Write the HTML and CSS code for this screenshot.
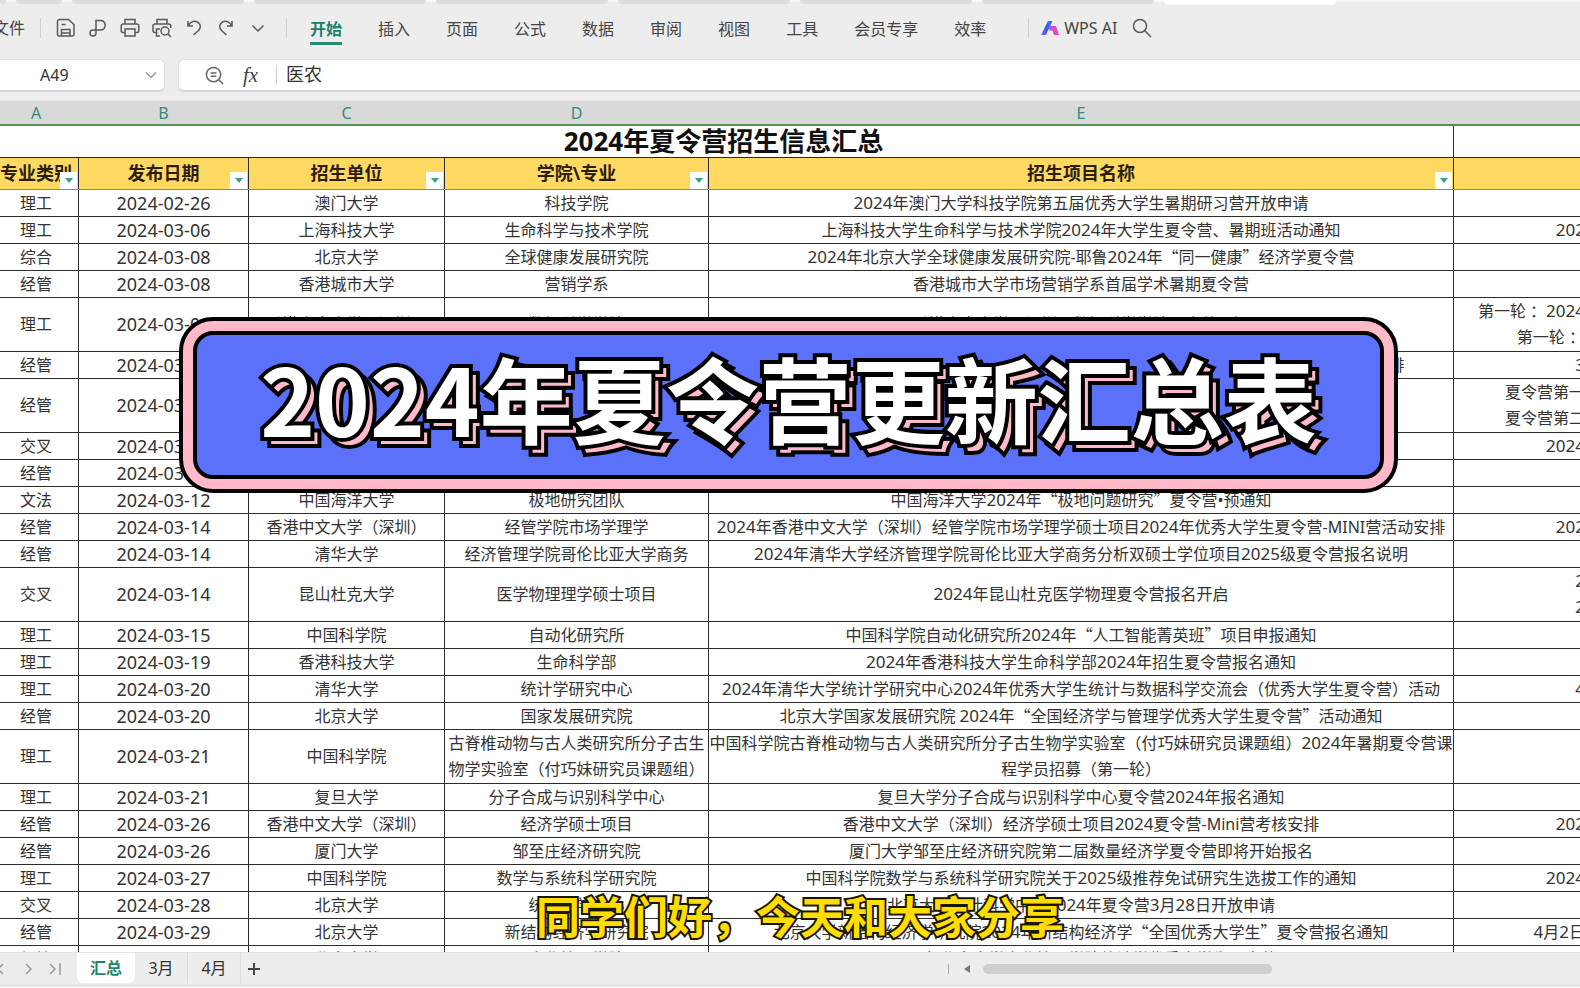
FILE: index.html
```html
<!DOCTYPE html>
<html lang="zh-CN">
<head>
<meta charset="utf-8">
<title>2024年夏令营招生信息汇总</title>
<link rel="stylesheet" href="styles.css">
</head>
<body>
<div class="app">
  <div class="doc-tabs" aria-hidden="true">
    <i class="w-s"></i><i class="w-m"></i><i class="w-l"></i><i class="w-l"></i><i class="w-l"></i><i class="w-l"></i><i class="w-l"></i><i class="w-l"></i><i class="w-l active"></i>
  </div>

  <header class="menubar">
    <button class="menu file">文件</button>
    <span class="sep"></span>
    <div class="quick">
      <button class="icon" aria-label="保存"><svg viewBox="0 0 20 20"><path d="M1.500 3.500a2 2 0 0 1 2-2h9l5.500 5v9.500a2 2 0 0 1-2 2H3.500a2 2 0 0 1-2-2zM5.500 18v-6.500h8.500V18M5.500 6.500h4M5.500 15H14"/></svg></button>
      <button class="icon" aria-label="输出"><svg viewBox="0 0 20 20"><path d="M8 6.500V2.500h5a4.800 4.800 0 0 1 0 9.500H5a3 3 0 1 0 3 3V6.500"/></svg></button>
      <button class="icon" aria-label="打印"><svg viewBox="0 0 20 20"><path d="M5 6V1.500h10V6M5 14.500H3.200a2 2 0 0 1-2-2V8a2 2 0 0 1 2-2h13.600a2 2 0 0 1 2 2v4.500a2 2 0 0 1-2 2H15M5 11h10v7H5z"/></svg></button>
      <button class="icon" aria-label="打印预览"><svg viewBox="0 0 20 20"><path d="M5 6V1.500h10V6M4.500 14.500H3a2 2 0 0 1-2-2V8a2 2 0 0 1 2-2h13.800a2 2 0 0 1 2 2v2M8 18H4.500v-7H8"/><circle cx="13" cy="13" r="4"/><path d="m15.800 15.800 3.200 3.200"/></svg></button>
      <button class="icon" aria-label="撤销"><svg viewBox="0 0 20 20"><path d="M4 3v5h5M4.300 7.600C6.500 3.500 11 2 14 4.300s3 5.700.500 8.200L9.500 17"/></svg></button>
      <button class="icon" aria-label="恢复"><svg viewBox="0 0 20 20"><path d="M16 3v5h-5M15.700 7.600C13.500 3.500 9 2 6 4.300s-3 5.700-.500 8.200l5 4.500"/></svg></button>
      <button class="icon" aria-label="更多"><svg viewBox="0 0 20 20"><path d="m4.500 7.500 5.500 5.500 5.500-5.500"/></svg></button>
    </div>
    <span class="sep"></span>
    <nav class="tabs">
      <button class="menu on">开始</button><button class="menu">插入</button><button class="menu">页面</button><button class="menu">公式</button><button class="menu">数据</button><button class="menu">审阅</button><button class="menu">视图</button><button class="menu">工具</button><button class="menu">会员专享</button><button class="menu">效率</button>
    </nav>
    <span class="sep"></span>
    <button class="ai">
      <svg class="logo" viewBox="0 0 20 20">
        <defs>
          <linearGradient id="ai1" x1="0" y1="1" x2="1" y2="0"><stop offset="0" stop-color="#8a5cff"/><stop offset="0.500" stop-color="#2f5bf0"/><stop offset="1" stop-color="#3f7bff"/></linearGradient>
          <linearGradient id="ai2" x1="0" y1="0" x2="1" y2="1"><stop offset="0" stop-color="#c04be8"/><stop offset="1" stop-color="#f0508c"/></linearGradient>
        </defs>
        <path d="M8 3h4.500L6 17H1z" fill="url(#ai1)"/>
        <path d="M10 8h6l3 9h-5l-1.500-4.500H9z" fill="url(#ai2)"/>
      </svg>WPS AI</button>
    <button class="icon search" aria-label="搜索"><svg viewBox="0 0 20 20"><circle cx="8" cy="8" r="6.500"/><path d="m12.700 12.700 6.300 6.300"/></svg></button>
  </header>

  <div class="formula-row">
    <div class="namebox">
      <input aria-label="名称框" value="A49">
      <svg class="chev" viewBox="0 0 12 12"><path d="m1 3.500 5 5 5-5"/></svg>
    </div>
    <div class="formula">
      <svg class="zoom" viewBox="0 0 20 20"><circle cx="9" cy="9" r="7.500"/><path d="M14.500 14.500 19 19M6 7.300h6M6 10.700h6"/></svg>
      <span class="fx">fx</span>
      <span class="sep"></span>
      <input aria-label="编辑栏" value="医农">
    </div>
  </div>

  <main class="sheet">
    <table>
      <colgroup><col class="ca"><col class="cb"><col class="cc"><col class="cd"><col class="ce"><col></colgroup>
      <thead>
        <tr class="letters"><th>A</th><th>B</th><th>C</th><th>D</th><th>E</th><th></th></tr>
        <tr class="title"><th colspan="5">2024年夏令营招生信息汇总</th><th></th></tr>
        <tr class="fields">
          <th>专业类别<button class="filter" aria-label="筛选专业类别"></button></th>
          <th>发布日期<button class="filter" aria-label="筛选发布日期"></button></th>
          <th>招生单位<button class="filter" aria-label="筛选招生单位"></button></th>
          <th>学院\专业<button class="filter" aria-label="筛选学院专业"></button></th>
          <th>招生项目名称<button class="filter" aria-label="筛选招生项目名称"></button></th>
          <th></th>
        </tr>
      </thead>
      <tbody>
        <tr><td>理工</td><td>2024-02-26</td><td>澳门大学</td><td>科技学院</td><td><b>2024</b>年澳门大学科技学院第五届优秀大学生暑期研习营开放申请</td><td></td></tr>
        <tr><td>理工</td><td>2024-03-06</td><td>上海科技大学</td><td>生命科学与技术学院</td><td>上海科技大学生命科学与技术学院<b>2024</b>年大学生夏令营、暑期班活动通知</td><td><b>202</b></td></tr>
        <tr><td>综合</td><td>2024-03-08</td><td>北京大学</td><td>全球健康发展研究院</td><td><b>2024</b>年北京大学全球健康发展研究院-耶鲁<b>2024</b>年<i>“</i>同一健康<i>”</i>经济学夏令营</td><td></td></tr>
        <tr><td>经管</td><td>2024-03-08</td><td>香港城市大学</td><td>营销学系</td><td>香港城市大学市场营销学系首届学术暑期夏令营</td><td></td></tr>
        <tr class="tall"><td>理工</td><td>2024-03-08</td><td>香港中文大学（深圳）</td><td>数据科学学院</td><td>香港中文大学（深圳）数据科学学院夏令营通知</td><td>第一轮 ：<b>2024</b><br>第一轮 ：</td></tr>
        <tr><td>经管</td><td>2024-03-11</td><td></td><td></td><td><b>2024</b>年香港中文大学（深圳）经管学院市场学理学硕士项目优秀大学生夏令营考核活动安排</td><td><b>3</b></td></tr>
        <tr class="tall"><td>经管</td><td>2024-03-11</td><td></td><td></td><td></td><td>夏令营第一<br>夏令营第二</td></tr>
        <tr><td>交叉</td><td>2024-03-12</td><td></td><td></td><td></td><td><b>2024</b></td></tr>
        <tr><td>经管</td><td>2024-03-12</td><td></td><td></td><td></td><td></td></tr>
        <tr><td>文法</td><td>2024-03-12</td><td>中国海洋大学</td><td>极地研究团队</td><td>中国海洋大学<b>2024</b>年<i>“</i>极地问题研究<i>”</i>夏令营•预通知</td><td></td></tr>
        <tr><td>经管</td><td>2024-03-14</td><td>香港中文大学（深圳）</td><td>经管学院市场学理学</td><td><b>2024</b>年香港中文大学（深圳）经管学院市场学理学硕士项目<b>2024</b>年优秀大学生夏令营-MINI营活动安排</td><td><b>202</b></td></tr>
        <tr><td>经管</td><td>2024-03-14</td><td>清华大学</td><td>经济管理学院哥伦比亚大学商务</td><td><b>2024</b>年清华大学经济管理学院哥伦比亚大学商务分析双硕士学位项目<b>2025</b>级夏令营报名说明</td><td></td></tr>
        <tr class="tall"><td>交叉</td><td>2024-03-14</td><td>昆山杜克大学</td><td>医学物理理学硕士项目</td><td><b>2024</b>年昆山杜克医学物理夏令营报名开启</td><td><b>2</b><br><b>2</b></td></tr>
        <tr><td>理工</td><td>2024-03-15</td><td>中国科学院</td><td>自动化研究所</td><td>中国科学院自动化研究所<b>2024</b>年<i>“</i>人工智能菁英班<i>”</i>项目申报通知</td><td></td></tr>
        <tr><td>理工</td><td>2024-03-19</td><td>香港科技大学</td><td>生命科学部</td><td><b>2024</b>年香港科技大学生命科学部<b>2024</b>年招生夏令营报名通知</td><td></td></tr>
        <tr><td>理工</td><td>2024-03-20</td><td>清华大学</td><td>统计学研究中心</td><td><b>2024</b>年清华大学统计学研究中心<b>2024</b>年优秀大学生统计与数据科学交流会（优秀大学生夏令营）活动</td><td><b>4</b></td></tr>
        <tr><td>经管</td><td>2024-03-20</td><td>北京大学</td><td>国家发展研究院</td><td>北京大学国家发展研究院 <b>2024</b>年<i>“</i>全国经济学与管理学优秀大学生夏令营<i>”</i>活动通知</td><td></td></tr>
        <tr class="tall"><td>理工</td><td>2024-03-21</td><td>中国科学院</td><td>古脊椎动物与古人类研究所分子古生<br>物学实验室（付巧妹研究员课题组）</td><td>中国科学院古脊椎动物与古人类研究所分子古生物学实验室（付巧妹研究员课题组）<b>2024</b>年暑期夏令营课<br>程学员招募（第一轮）</td><td></td></tr>
        <tr><td>理工</td><td>2024-03-21</td><td>复旦大学</td><td>分子合成与识别科学中心</td><td>复旦大学分子合成与识别科学中心夏令营<b>2024</b>年报名通知</td><td></td></tr>
        <tr><td>经管</td><td>2024-03-26</td><td>香港中文大学（深圳）</td><td>经济学硕士项目</td><td>香港中文大学（深圳）经济学硕士项目<b>2024</b>夏令营-Mini营考核安排</td><td><b>202</b></td></tr>
        <tr><td>经管</td><td>2024-03-26</td><td>厦门大学</td><td>邹至庄经济研究院</td><td>厦门大学邹至庄经济研究院第二届数量经济学夏令营即将开始报名</td><td></td></tr>
        <tr><td>理工</td><td>2024-03-27</td><td>中国科学院</td><td>数学与系统科学研究院</td><td>中国科学院数学与系统科学研究院关于<b>2025</b>级推荐免试研究生选拔工作的通知</td><td><b>2024</b></td></tr>
        <tr><td>交叉</td><td>2024-03-28</td><td>北京大学</td><td>统计科学中心</td><td>北京大学统计科学中心<b>2024</b>年夏令营<b>3</b>月<b>28</b>日开放申请</td><td></td></tr>
        <tr><td>经管</td><td>2024-03-29</td><td>北京大学</td><td>新结构经济学研究院</td><td>北京大学新结构经济学研究院<b>2024</b>年新结构经济学<i>“</i>全国优秀大学生<i>”</i>夏令营报名通知</td><td><b>4</b>月<b>2</b>日</td></tr>
        <tr><td>经管</td><td>2024-03-29</td><td>北京大学</td><td>光华管理学院</td><td><b>2024</b>年北京大学光华管理学院统计学优秀大学生夏令营</td><td></td></tr>
      </tbody>
    </table>
  </main>

  <footer class="bottom">
    <div class="steps">
      <button class="step" aria-label="上一个"><svg viewBox="0 0 12 12"><path d="M8 1 3 6l5 5"/></svg></button>
      <button class="step" aria-label="下一个"><svg viewBox="0 0 12 12"><path d="m4 1 5 5-5 5"/></svg></button>
      <button class="step" aria-label="最后一个"><svg viewBox="0 0 12 12"><path d="m1 1 5 5-5 5M11 0v12"/></svg></button>
    </div>
    <button class="stab on">汇总</button>
    <button class="stab">3月</button>
    <button class="stab">4月</button>
    <button class="add" aria-label="新建工作表"><svg viewBox="0 0 12 12"><path d="M6 0v12M0 6h12"/></svg></button>
    <div class="scroll">
      <span class="grip"></span>
      <svg class="arrow" viewBox="0 0 6 8"><path d="M6 0v8L0 4z"/></svg>
      <span class="thumb"></span>
    </div>
  </footer>
  <div class="status"></div>
</div>

<div class="banner"><div class="banner-in"><h1 class="headline" data-text="2024年夏令营更新汇总表">2024年夏令营更新汇总表</h1></div></div>
<p class="caption">同学们好，今天和大家分享</p>
</body>
</html>
```

FILE: styles.css
```css
* { box-sizing: border-box; }

body {
  margin: 0;
  overflow: hidden;
  background: #ededed;
  color: #333;
  font: 16px/26px "Noto Sans", "Noto Sans CJK SC", sans-serif;
}

button, input {
  margin: 0;
  padding: 0;
  border: 0;
  background: none;
  color: inherit;
  font: inherit;
  white-space: nowrap;
}

svg { display: block; fill: none; stroke: currentColor; }

.app { display: flex; flex-direction: column; height: 100vh; }

/* document tabs */
.doc-tabs { display: flex; gap: 10px; height: 5px; align-items: flex-start; background: linear-gradient(#f8f8f8 2px, #ededed 2px); }
.doc-tabs i { height: 4px; background: #dcdcdc; border-radius: 0 0 4px 4px; }
.doc-tabs .w-s { width: 6px; }
.doc-tabs .w-m { width: 46px; }
.doc-tabs .w-l { width: 172px; }
.doc-tabs .active { background: #fff; height: 5px; }

/* menu bar */
.menubar { display: flex; align-items: center; height: 46px; color: #444; }
.sep { width: 1px; height: 20px; background: #d0d0d0; flex: none; }
.menu { height: 32px; }
.file { margin-left: -7px; margin-right: 15px; }
.quick { display: flex; gap: 12px; padding: 0 18px 0 15px; }
.icon { width: 20px; height: 20px; color: #5a5a5a; }
.icon svg { width: 20px; height: 20px; stroke-width: 1.5; }
.tabs { display: flex; gap: 36px; padding: 2px 42px 0 23px; }
.tabs .on { color: #16836a; font-weight: 700; border-bottom: 3px solid #2a8a70; border-radius: 1px; padding-top: 3px; }
.ai { display: flex; align-items: center; gap: 4px; padding-left: 11px; }
.logo { width: 20px; height: 20px; stroke: none; }
.search { margin-left: 15px; }

/* formula row */
.formula-row { display: flex; gap: 13px; padding: 8px 0 9px; }
.namebox, .formula { display: flex; align-items: center; height: 33px; background: #fff; border: 1px solid #e0e0e0; border-bottom: 2px solid #d6d6d6; }
.namebox { width: 165px; border-left: 0; border-radius: 0 6px 6px 0; padding-right: 7px; }
.namebox input { flex: 1; min-width: 0; padding-left: 40px; }
.chev { width: 12px; height: 12px; color: #999; stroke-width: 1.5; }
.formula { flex: 1; border-right: 0; border-radius: 6px 0 0 6px; padding-left: 26px; }
.zoom { width: 19px; height: 19px; stroke-width: 1.6; color: #666; }
.fx { margin: 0 15px 0 19px; width: 18px; font: italic 21px/24px "Liberation Serif", serif; color: #444; }
.formula input { flex: 1; min-width: 0; padding: 0 0 3px 9px; font-size: 18px; }

/* sheet */
.sheet { flex: 1; min-height: 0; overflow: hidden; background: #fff; }
table { width: calc(100% + 13px); margin-left: -7px; border-collapse: collapse; table-layout: fixed; }
.ca { width: 85px; }
.cb { width: 170px; }
.cc { width: 196px; }
.cd { width: 264px; }
.ce { width: 745px; }
th, td { padding: 0; border: 1px solid #2b2b2b; text-align: center; white-space: nowrap; overflow: hidden; }
td { height: 27px; line-height: 24px; }
.tall td { height: 54px; line-height: 26px; }
td b { font-size: 17px; font-weight: 400; line-height: 1; }
td:nth-child(2) { font-size: 18px; }
td i { font-family: "Noto Sans CJK SC", sans-serif; font-style: normal; line-height: 1; }
td:last-child { text-align: right; }
.letters th { height: 24px; border: 0; border-bottom: 2px solid #548f4c; background: #d9d9da; color: #2f8c7c; font-weight: 400; line-height: 22px; }
.title th { height: 32px; color: #111; font-size: 26px; line-height: 30px; }
.fields th { position: relative; height: 32px; background: #ffd962; border-bottom-color: #5f9f78; color: #2b1d10; font-size: 18px; line-height: 30px; }
.filter { position: absolute; right: 1px; bottom: 0; display: grid; place-items: center; width: 17px; height: 17px; background: #fff; }
.filter::after { content: ""; border: 4px solid transparent; border-top: 5px solid #3aa08a; border-bottom: 0; }

/* sheet tabs */
.bottom { display: flex; height: 33px; background: #ededed; border-top: 1px solid #e2e2e2; align-items: flex-start; }
.steps { display: flex; gap: 15px; width: 77px; height: 31px; align-items: center; color: #999; }
.steps .step:first-child { margin-left: -5px; }
.step svg { width: 12px; height: 12px; stroke-width: 1.5; }
.stab { height: 30px; width: 53px; border-right: 1px solid #dcdcdc; }
.stab.on { width: 58px; background: #fff; border: 0; border-radius: 0 0 6px 6px; color: #1c856c; font-weight: 700; }
.add { padding: 10px 7px; color: #444; }
.add svg { width: 12px; height: 12px; stroke-width: 2; }
.scroll { display: flex; align-items: center; height: 31px; margin-left: auto; width: 40%; }
.grip { width: 1px; height: 10px; background: #aaa; }
.arrow { width: 6px; height: 8px; margin: 0 13px 0 15px; fill: #777; stroke: none; }
.thumb { width: 289px; height: 10px; border-radius: 5px; background: #cfcfcf; }
.status { height: 3px; background: #f2f2f2; border-top: 1px solid #d8d8d8; }

/* title card over the sheet */
.banner { position: absolute; top: 317px; left: 179px; right: 182px; padding: 10px; border: 4px solid #000; border-radius: 34px; background: #ffb9c8; }
.banner-in { display: flex; justify-content: center; padding-bottom: 16px; border: 4px solid #000; border-radius: 20px; background: #5c71f9; }
.headline { position: relative; isolation: isolate; margin: 0; color: #fff; font: 700 93px/124px "Noto Sans CJK SC", sans-serif; white-space: nowrap; -webkit-text-stroke: 8px #000; paint-order: stroke fill; stroke-linejoin: round; }
.headline::before { content: attr(data-text); position: absolute; z-index: -1; top: 7px; left: 7px; color: #ffb9c8; }
.caption { position: absolute; left: 0; right: 0; bottom: 41px; margin: 0 0 0 20px; text-align: center; color: #ffdd00; font: 700 44px/64px "Noto Sans CJK SC", sans-serif; -webkit-text-stroke: 4px #1a1600; paint-order: stroke fill; }
```
